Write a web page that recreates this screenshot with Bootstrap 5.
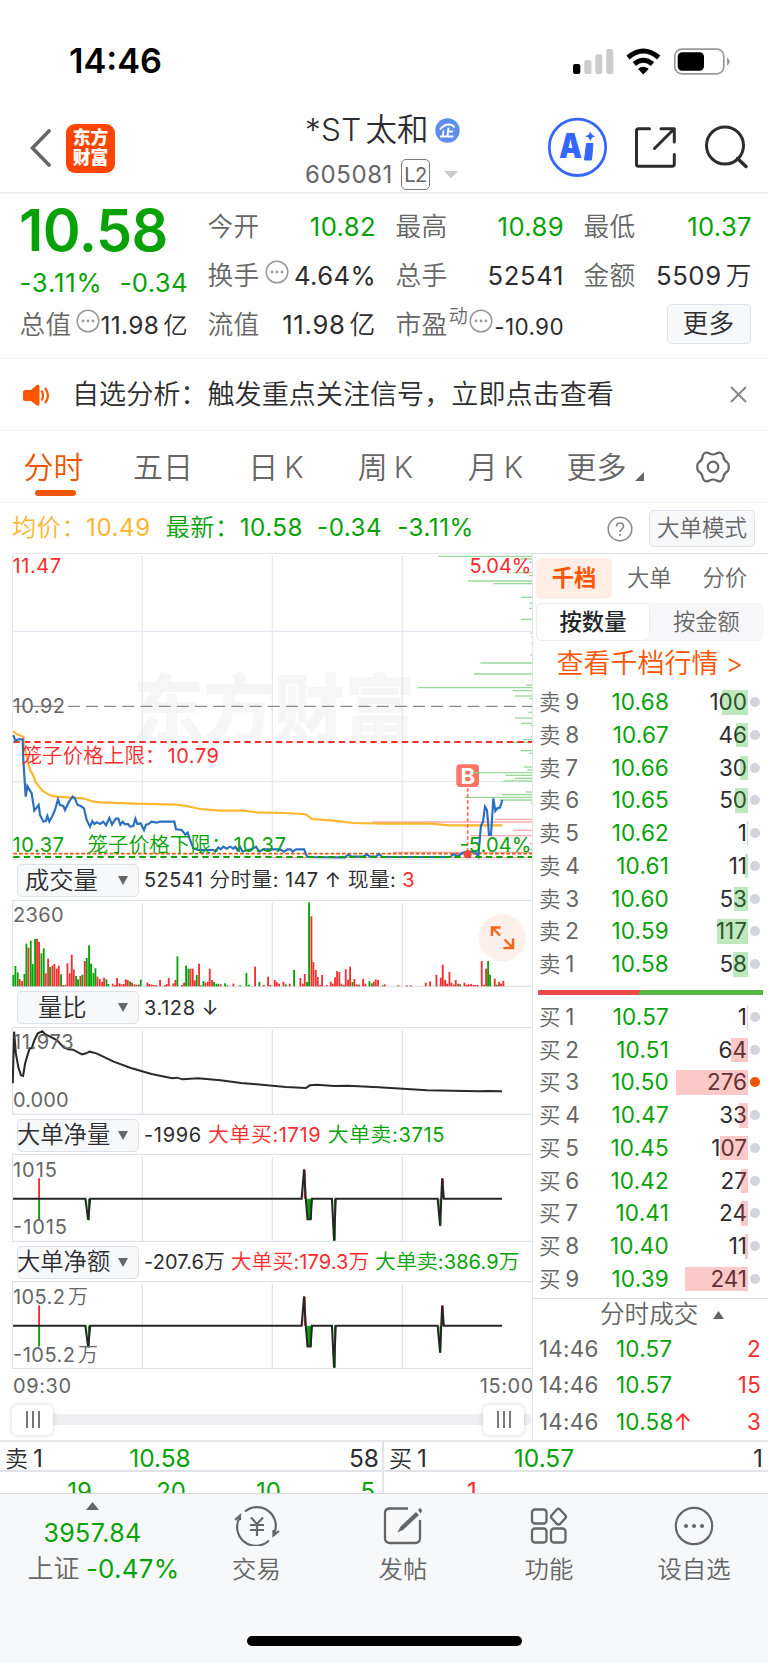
<!DOCTYPE html>
<html lang="zh-CN">
<head>
<meta charset="utf-8">
<meta name="viewport" content="width=device-width, initial-scale=1">
<title>*ST太和 605081</title>
<link rel="stylesheet" href="https://cdn.jsdelivr.net/npm/bootstrap@5.3.0/dist/css/bootstrap.min.css">
<style>
:root{--up:#fc2b2e;--down:#07a207;--ink:#2d2d2f;--dim:#666;--line:#e3e5ec;--soft:#f7f8fa}
body{font-family:Inter,"Noto Sans CJK SC",sans-serif;font-weight:400;color:var(--ink);background:#fff;width:768px;overflow-x:hidden;line-height:1}
.phone{width:768px;height:1663px;overflow:hidden}
.phone>*{flex-shrink:0}
.up{color:var(--up)}.down{color:var(--down)}.dim{color:var(--dim)}
.cj{font-weight:350}
svg{display:block;flex:none}
svg text{font-family:Inter,"Noto Sans CJK SC",sans-serif}
.nw{white-space:nowrap}
.statusbar{height:103px;padding:20px 38px 0 69px}
.clock{font-size:34.3px;font-weight:600;color:#000}
.topbar{height:91px;border-bottom:2px solid #eee;padding:1px 18px 0 30px;position:relative}
.logo{width:49px;height:49px;border-radius:9px;background:#ff4400;color:#fff;font-size:17.8px;line-height:20px;font-weight:900;margin-left:14px}
.title{position:absolute;left:305px;top:10px}
.name{font-size:31.5px;line-height:34px}
.code{font-size:24px;line-height:30px;margin-top:12px}
.lv{border:1.5px solid #777;border-radius:5px;width:29px;height:31px;font-size:20px;line-height:30px;letter-spacing:-.5px}
.quote{display:grid;grid-template-columns:168px 168px 168px 168px;column-gap:20px;grid-template-rows:49px 49px 49px;padding:8px 15px 8px 19px;height:165px;border-bottom:1px solid #eceef0;font-size:25.7px;letter-spacing:.35px}
.quote>div:not(.big){margin-left:.5px;margin-right:-1px}
.quote .big{font-size:57.5px;font-weight:600;letter-spacing:-.5px;line-height:58px;margin-top:-1px;margin-bottom:-8px}
.more{background:var(--soft);border:1.5px solid #dfe1e8;border-radius:5px;width:84px;height:40px;color:var(--ink)}
.notice{height:72px;border-bottom:1px solid #f0f0f2;padding:0 21px 0 22px;font-size:27.1px}
.tabs{display:grid;grid-template-columns:107px 112px 120px 93px 127px 92px 117px;height:72px;border-bottom:1px solid #eee;font-size:30px;color:var(--dim)}
.tabs>div{display:flex;align-items:center;justify-content:center;position:relative}
.tabs .on{color:#ee5500}
.tabs .on::after{content:"";position:absolute;left:34.5px;bottom:6px;width:41px;height:6px;border-radius:3px;background:#ee5500}
.info{height:50px;padding:1px 13px 0 12px;font-size:24.2px;letter-spacing:.5px}
.left{width:521px;margin-left:12px;margin-right:-1px}
.tool{height:40px;padding:1px 0 0 5px;font-size:20px;gap:5px;letter-spacing:.4px}
.tool span .cj{font-size:20.8px}
.pick{width:122px;height:33px;border:1.5px solid #dfe1e8;border-radius:5px;background:var(--soft);font-size:24.3px;position:relative;flex:none;letter-spacing:0}
.pick i{position:absolute;right:10px;top:11px;border:5px solid transparent;border-top:9px solid #666;border-bottom:0}
.pick.four{font-size:23.3px;text-indent:-1px}
.right{width:236px;border-left:1px solid var(--line);border-top:1px solid #dcdde2}
.seg{height:38px;margin:4px 4px 0 3px;border-radius:6px;background:#f7f7fa;font-size:22.3px}
.seg .on{width:114px;height:38px;background:#fff;border:1.5px solid #ececf0;border-radius:6px;font-weight:500}
.kinds{height:41px;margin:4px 3px 0;font-size:22.3px}
.kinds .on{width:76px;height:41px;border-radius:6px;background:#ffeee6;color:#ff5500;font-weight:700}
.lvl{height:32.75px;font-size:22.5px;position:relative;padding:0 21px 0 6px}
.lvl .px{width:80px;letter-spacing:.2px}
.lvl .bar{position:absolute;right:20.5px;top:4px;height:24.5px}
.lvl .dot{position:absolute;right:8px;top:11px;width:10px;height:10px;border-radius:50%;background:#d3d5dc}
.ratio{height:5px;margin:3px 5px 0 5px;background:linear-gradient(120deg,#ee4a4a 45%,#57b943 45.2%)}
.tick{height:36.7px;font-size:22.4px;padding:0 7px 0 6px;letter-spacing:.25px}
.axis{height:33px;font-size:20px;color:var(--dim);letter-spacing:.6px;margin:0 -1px 0 1px}
.slider{height:38px;position:relative}
.track{position:absolute;left:30px;right:1px;top:12px;height:11px;background:#efeff2;border-radius:5px}
.grip{width:41px;height:30px;border-radius:6px;background:#fff;box-shadow:0 0 5px rgba(0,0,0,.18);position:absolute;top:2.5px;gap:4px}
.grip b{width:2px;height:17px;background:#777}
.best{height:32px;margin-top:-1px;border-top:2px solid #e6e7eb;border-bottom:2px solid #e2e3e8;font-size:24.5px}
.best>div{padding-top:4px!important}
.queue{height:21px;overflow:hidden;font-size:24px}
.queue>div{padding-top:8px}
.split{border-left:2px solid #e3e4e9}
.foot{height:170px;background:var(--soft);border-top:1px solid #d8d9de;font-size:24.4px;color:var(--dim);position:relative}
.foot .item{height:92px;padding-top:11.5px}
.foot .item span{margin-top:11px}
.homebar{position:absolute;left:247px;bottom:17px;width:275px;height:10px;border-radius:5px;background:#000}
</style>
</head>
<body>
<div class="phone d-flex flex-column">
  <div class="statusbar d-flex align-items-center justify-content-between">
    <span class="clock">14:46</span>
    <svg width="158" height="28" viewBox="572 47 158 28">
      <rect x="573" y="63" width="7.3" height="10" rx="2"/><g fill="#ccc"><rect x="584.3" y="59" width="7.2" height="14" rx="2"/><rect x="595.3" y="53.3" width="7" height="19.7" rx="2"/><rect x="606.3" y="48" width="7" height="25" rx="2"/></g>
      <g fill="none" stroke="#000" stroke-width="5"><path d="M628 56.500Q643.300 43.500 658.700 56.500"/><path d="M634.300 63Q643.300 55.500 652.500 63"/></g><path d="M638 68Q643.300 63.500 648.700 68L643.300 73.500Z"/>
      <rect x="674.8" y="48.200" width="49" height="24.600" rx="7" fill="none" stroke="#999" stroke-width="1.700"/><rect x="677.700" y="51.200" width="26.300" height="18.600" rx="4.500"/><path d="M727 56.500Q729.700 58 729.700 60.500T727 64.500Z" fill="#999"/>
    </svg>
  </div>

  <div class="topbar d-flex align-items-center justify-content-between">
    <div class="d-flex align-items-center">
      <svg width="22" height="38" viewBox="0 0 22 38"><path d="M19 2L2.500 19 19 36" fill="none" stroke="#666" stroke-width="3.600" stroke-linecap="round"/></svg>
      <div class="logo d-flex flex-column align-items-center justify-content-center"><span>东方</span><span>财富</span></div>
    </div>
    <div class="title">
      <div class="name d-flex align-items-center cj nw"><span style="letter-spacing:.3px">*ST</span><span class="ms-1">太和</span>
        <svg style="margin-left:6px" width="25" height="25" viewBox="0 0 25 25"><circle cx="12.500" cy="12.500" r="12.200" fill="#5f8eea"/><g fill="none" stroke="#fff" stroke-width="1.900"><path d="M5 11.500Q9 6.500 13.500 6.500T19.500 9.500M5 18.500H18.500M8.500 12.500L7.800 18.500M13.500 9.500L12.500 18M13 13.500H18"/></g></svg>
      </div>
      <div class="code d-flex align-items-center dim"><span style="letter-spacing:.6px">605081</span><span class="lv text-center ms-2">L2</span><svg style="margin-left:14px" width="14" height="8"><path d="M0 0H14L7 7.500Z" fill="#ccc"/></svg></div>
    </div>
    <svg width="203" height="62" viewBox="547 117 203 62">
      <circle cx="577.500" cy="147.300" r="28.200" fill="none" stroke="#3566ff" stroke-width="2.800"/>
      <text x="559" y="158" font-size="34" font-weight="900" fill="#3566ff" textLength="23" lengthAdjust="spacingAndGlyphs">A</text>
      <path d="M586.500 143.500H593L591.500 160H584.500Z" fill="#3566ff" stroke="#3566ff" stroke-linejoin="round"/><path d="M590.300 131.500L592 134.800 595.300 136.200 592 137.700 590.300 141 588.600 137.700 585.300 136.200 588.600 134.800Z" fill="#3566ff"/>
      <g fill="none" stroke="#2d2d2f" stroke-width="3" stroke-linejoin="round" stroke-linecap="round"><path d="M649.500 128.700H638.500Q636.500 128.700 636.500 130.700V164Q636.500 166.300 638.500 166.300H672Q674.300 166.300 674.300 164V154.500M661 128.700H674.300V142M673.500 129.500L654.500 148.500"/><circle cx="725" cy="145.500" r="18.500"/><path d="M737.500 158.500L746 166.500" stroke-width="3.500"/></g>
    </svg>
  </div>

  <div class="quote nw">
    <div class="big down">10.58</div>
    <div class="d-flex align-items-center justify-content-between"><span class="dim cj">今开</span><span class="down">10.82</span></div>
    <div class="d-flex align-items-center justify-content-between"><span class="dim cj">最高</span><span class="down">10.89</span></div>
    <div class="d-flex align-items-center justify-content-between"><span class="dim cj">最低</span><span class="down">10.37</span></div>

    <div class="d-flex align-items-center justify-content-between down" style="padding-top:14px"><span style="letter-spacing:.8px">-3.11%</span><span>-0.34</span></div>
    <div class="d-flex align-items-center justify-content-between"><span class="dim cj">换手</span><svg class="mb-2" width="24" height="24"><use href="#dots"/></svg><span>4.64%</span></div>
    <div class="d-flex align-items-center justify-content-between"><span class="dim cj">总手</span><span style="letter-spacing:.6px">52541</span></div>
    <div class="d-flex align-items-center justify-content-between"><span class="dim cj">金额</span><span style="letter-spacing:.6px">5509<span class="cj ms-1">万</span></span></div>

    <div class="d-flex align-items-center justify-content-between"><span class="dim cj">总值</span><svg class="mb-2 ms-1" width="24" height="24"><use href="#dots"/></svg><span style="font-size:24.400px;padding-top:2px">11.98<span class="cj ms-1">亿</span></span></div>
    <div class="d-flex align-items-center justify-content-between"><span class="dim cj">流值</span><span style="letter-spacing:.7px">11.98<span class="cj ms-1">亿</span></span></div>
    <div class="d-flex align-items-center justify-content-between"><span class="dim cj">市盈</span><span class="dim cj mb-3" style="font-size:19px">动</span><svg class="mb-2" width="24" height="24"><use href="#dots"/></svg><span style="font-size:22.500px;padding-top:5px">-10.90</span></div>
    <div class="d-flex align-items-center justify-content-end"><span class="more d-flex align-items-center justify-content-center cj" style="margin-right:1.500px;margin-top:-2px">更多</span></div>
  </div>
  <svg width="0" height="0" class="position-absolute"><defs><g id="dots"><circle cx="12" cy="12" r="10.800" fill="none" stroke="#999" stroke-width="1.500"/><g fill="#999"><circle cx="7" cy="12" r="1.400"/><circle cx="12" cy="12" r="1.400"/><circle cx="17" cy="12" r="1.400"/></g></g></defs></svg>

  <div class="notice d-flex align-items-center cj nw">
    <svg width="28" height="24" viewBox="22 382 28 24"><path d="M25 389H31L37 383.800Q39.500 383 39.500 386V403Q39.500 405.500 37 404.500L31 400H25Q23 400 23 398V391Q23 389 25 389Z" fill="#ff5500"/><path d="M41.500 389.500Q44.500 394.500 41.500 399.500M45 387Q51 394.500 45 402" fill="none" stroke="#ff5500" stroke-width="2.200"/></svg>
    <span style="margin-left:22px">自选分析：触发重点关注信号，立即点击查看</span>
    <svg class="ms-auto" width="17" height="17"><path d="M1 1L16 16M16 1L1 16" stroke="#888" stroke-width="2"/></svg>
  </div>

  <div class="tabs cj nw">
    <div class="on">分时</div><div>五日</div><div style="padding-right:6px">日<span style="margin-left:6px">K</span></div><div>周<span style="margin-left:6px">K</span></div><div>月<span style="margin-left:6px">K</span></div>
    <div>更多<svg class="ms-2 align-self-end" style="margin-bottom:21px" width="9" height="9"><path d="M9 0V9H0Z" fill="#666"/></svg></div>
    <div><svg width="34" height="34" viewBox="-17 -17 34 34" style="margin-left:6px"><path d="M-6.500 -14.500Q-5 -14.500 -3.500 -13.500Q0 -11.500 3.500 -13.500Q6 -15 8 -14Q10 -13 10.500 -10Q11 -6.500 14 -4.800Q16 -3.500 15.700 0Q16 3.500 14 4.800Q11 6.500 10.500 10Q10 13 8 14Q6 15 3.500 13.500Q0 11.500 -3.500 13.500Q-6 15 -8 14Q-10 13 -10.500 10Q-11 6.500 -14 4.800Q-16 3.500 -15.700 0Q-16 -3.500 -14 -4.800Q-11 -6.500 -10.500 -10Q-10 -14 -6.500 -14.500Z" fill="none" stroke="#666" stroke-width="2.200"/><circle r="5.300" fill="none" stroke="#666" stroke-width="2.200"/></svg></div>
  </div>

  <div class="info d-flex align-items-center nw">
    <span style="color:#fdb62f"><span class="cj">均价：</span>10.49</span>
    <span class="down" style="margin-left:15px"><span class="cj">最新：</span>10.58</span>
    <span class="down" style="margin-left:14px">-0.34</span><span class="down" style="margin-left:15px">-3.11%</span>
    <svg class="ms-auto" width="26" height="26" viewBox="-13 -13 26 26"><circle r="11.800" fill="none" stroke="#888" stroke-width="1.500"/><path d="M-3.500 -2.500Q-3.500 -6 0 -6T3.500 -2.800Q3.500 -1 1.500 .5Q0 1.500 0 3M0 5V7" fill="none" stroke="#888" stroke-width="1.700"/></svg>
    <span class="more d-flex align-items-center justify-content-center cj" style="width:106px;height:37px;font-size:22.500px;margin-left:16px;letter-spacing:0;color:#666">大单模式</span>
  </div>

  <div class="d-flex" style="height:888px">
    <div class="left">
      <svg width="521" height="307" viewBox="12 553 521 307">
        <text x="133" y="736" font-size="74" font-weight="900" fill="#f6f6f6" textLength="282" lengthAdjust="spacingAndGlyphs">东方财富</text>
        <g stroke="#e4e7f0" stroke-width="1.200" fill="none"><path d="M12 553.500H533M12.500 553V860M142.300 556V860M272.300 556V860M402.300 556V860M12 631.300H532M12 781.700H532M12 859.500H533" /></g>
        <g id="depth" transform="translate(0 670) scale(.33333)" stroke-width="4"></g>
        <g fill="none" transform="translate(0 670) scale(.33333)">
          <path d="M40 109H1597" stroke="#8a8a8a" stroke-width="4" stroke-dasharray="36 18.500"/>
          <path d="M40 216H1597" stroke="#f52f2f" stroke-width="5.500" stroke-dasharray="19 12.500"/>
          <path d="M40 551H1597" stroke="#e8560e" stroke-width="5.500" stroke-dasharray="11 6"/>
          <path d="M40 183L50 192 70 200 75 240 90 300 98 313 108 338 128 363 150 376 170 380 250 385 280 395 300 397 400 401 530 404 560 408 600 417 660 422 730 422 770 427 850 429 910 432 920 434 935 447 1000 452 1060 459 1152 461 1290 461 1350 466 1507 466" stroke="#fdb62f" stroke-width="6.500"/>
          <path d="M40 195L46 212 55 208 68 208 70 270 77 380 82 348 95 370 103 422 116 405 120 435 130 455 138 452 142 438 148 455 156 440 165 420 174 388 180 405 190 408 195 420 207 395 218 380 225 386 232 404 242 408 252 415 260 450 270 470 277 453 283 462 290 457 300 462 310 455 318 466 328 444 336 464 347 446 355 446 361 464 368 455 375 463 384 462 390 470 400 468 406 446 412 462 422 460 432 480 438 464 446 462 454 455 470 458 480 455 523 455 528 478 545 480 556 494 563 488 570 510 580 535 595 540 640 540 646 545 655 532 662 538 670 530 680 536 690 530 700 536 706 530 712 540 720 530 728 545 740 540 755 538 768 530 778 545 790 538 840 538 852 545 862 538 872 538 878 545 888 538 912 538 922 561 1035 562 1045 554 1055 560 1090 560 1100 553 1110 560 1128 560 1138 552 1146 561 1350 561 1362 552 1372 560 1385 550 1400 545 1425 545 1435 560 1440 500 1443 467 1449 455 1455 410 1461 420 1467 495 1473 495 1480 385 1486 423 1492 415 1500 413 1507 390" stroke="#2b70c0" stroke-width="6.500"/>
          <path d="M40 561H1597" stroke="#07a207" stroke-width="6" stroke-dasharray="19 12.500"/>
          <path d="M1403 355V545" stroke="#f5664c" stroke-width="5" stroke-dasharray="10 8"/><circle cx="1403" cy="553" r="12" fill="#ee4a3a"/>
          <rect x="1369" y="283" width="68" height="68" rx="12" fill="#fb7464"/><path d="M1422 308H1440" stroke="#7ccf7c" stroke-width="4"/>
        </g>
        <text x="467.700" y="783.500" font-size="22" font-weight="700" fill="#fff" text-anchor="middle">B</text>
        <g font-size="20">
          <text x="12.500" y="573.300" fill="#fc2b2e" textLength="48.500">11.47</text>
          <text x="469.500" y="573.300" fill="#fc2b2e" textLength="62">5.04%</text>
          <text x="12.500" y="712.500" fill="#666" textLength="52.500">10.92</text>
          <text x="21.500" y="762.500" fill="#fc2b2e" textLength="144" font-weight="350" font-size="20.500">笼子价格上限：</text><text x="167.500" y="762.500" fill="#fc2b2e" textLength="51.500">10.79</text>
          <text x="12.500" y="852" fill="#07a207" textLength="51.500">10.37</text>
          <text x="87.500" y="852" fill="#07a207" textLength="144" font-weight="350" font-size="20.500">笼子价格下限：</text><text x="233.500" y="852" fill="#07a207" textLength="52.500">10.37</text>
          <text x="459.500" y="852" fill="#07a207" textLength="72">-5.04%</text>
        </g>
      </svg>

      <div class="tool d-flex align-items-center nw"><div class="pick d-flex align-items-center cj" style="padding-left:7px">成交量<i></i></div><span>52541 <span class="cj">分时量</span>: 147 ↑ <span class="cj">现量</span>: <span class="up">3</span></span></div>
      <svg width="521" height="87" viewBox="12 900 521 87">
        <path d="M12 900.500H533M12.500 900V987M142.300 903V987M272.300 903V987M402.300 903V987M12 986.400H533" stroke="#dfe2eb" stroke-width="1.200" fill="none"/>
        <text x="13" y="922" font-size="20" fill="#666" textLength="50.500">2360</text>
        <g id="vol" transform="translate(0 670) scale(.33333)"></g>
        <circle cx="502.300" cy="937.700" r="23.500" fill="#fdf0ea"/>
        <path d="M492 936V927.500H500.500M492 927.500L500 935.500M503.500 948H513V938.500M513 948L504.500 939.500" fill="none" stroke="#f26419" stroke-width="2.400"/>
      </svg>

      <div class="tool d-flex align-items-center nw"><div class="pick d-flex align-items-center cj" style="padding-left:20px">量比<i></i></div><span style="letter-spacing:.6px">3.128 ↓</span></div>
      <svg width="521" height="88" viewBox="12 1027 521 88">
        <path d="M12 1027.500H533M12.500 1027V1115M142.300 1030V1115M272.300 1030V1115M402.300 1030V1115M12 1114.400H533" stroke="#dfe2eb" stroke-width="1.200" fill="none"/>
        <path transform="translate(0 1000) scale(.34435 .33333)" d="M37 250L41 95 46 160 54 205 61 226 67 228 73 190 86 145 92 145 100 120 110 100 123 94 130 102 165 120 185 142 198 148 212 149 238 163 250 160 260 155 280 160 330 185 380 204 440 222 500 235 514 233 530 238 575 235 640 241 700 249 760 254 830 261 888 264 900 256 920 254 970 258 1010 257 1100 262 1240 271 1390 274 1420 273 1458 274" fill="none" stroke="#2b2b2b" stroke-width="6"/>
        <g font-size="20" fill="#666"><text x="13" y="1049" textLength="60.500">11.973</text><text x="13" y="1106.500" textLength="55.500">0.000</text></g>
      </svg>

      <div class="tool d-flex align-items-center nw" style="height:39px;letter-spacing:.65px"><div class="pick four d-flex align-items-center cj">大单净量<i></i></div><span>-1996 <span class="up"><span class="cj">大单买</span>:1719</span> <span class="down"><span class="cj">大单卖</span>:3715</span></span></div>
      <svg width="521" height="88" viewBox="12 1154 521 88">
        <g id="net"><path d="M12 1154.500H533M12.500 1154V1242M142.300 1157V1242M272.300 1157V1242M402.300 1157V1242M12 1241.400H533" stroke="#dfe2eb" stroke-width="1.200" fill="none"/>
        <g transform="translate(0 1000) scale(.34435 .33333)" fill="none">
          <path d="M113.500 535V596M885 510V596M1286 536V596" stroke="#fc2b2e" stroke-width="5.500"/><path d="M113.500 596V658M258 596V661M972.500 596V722M1279 596V677" stroke="#07a207" stroke-width="5.500"/><path d="M892 596H906V658H892Z" fill="#07a207"/>
          <path d="M38 596H248L256 660 262 596H876L883 508 888 596 893 658H902L906 596H964L970 722 975 596H1271L1278 677 1284 535 1289 596H1458" stroke="#262626" stroke-width="6"/>
        </g></g>
        <g font-size="20" fill="#666"><text x="13" y="1176.500" textLength="44">1015</text><text x="13" y="1234" textLength="54">-1015</text></g>
      </svg>

      <div class="tool d-flex align-items-center nw" style="height:39px;letter-spacing:.1px"><div class="pick four d-flex align-items-center cj">大单净额<i></i></div><span>-207.6<span class="cj">万</span> <span class="up"><span class="cj">大单买</span>:179.3<span class="cj">万</span></span> <span class="down"><span class="cj">大单卖</span>:386.9<span class="cj">万</span></span></span></div>
      <svg width="521" height="88" viewBox="12 1281 521 88">
        <use href="#net" y="127.100"/>
        <g font-size="20" fill="#666"><text x="13" y="1304" textLength="52">105.2</text><text x="68" y="1304" font-weight="350">万</text><text x="13" y="1361.500" textLength="62">-105.2</text><text x="78" y="1361.500" font-weight="350">万</text></g>
      </svg>
      <div class="axis d-flex justify-content-between align-items-center"><span>09:30</span><span>15:00</span></div>
      <div class="slider"><div class="track"></div>
        <div class="grip d-flex align-items-center justify-content-center" style="left:0"><b></b><b></b><b></b></div>
        <div class="grip d-flex align-items-center justify-content-center" style="left:471px"><b></b><b></b><b></b></div>
      </div>
    </div>

    <div class="right nw">
      <div class="kinds d-flex align-items-center dim cj"><span class="on d-flex align-items-center justify-content-center">千档</span><span style="margin-left:15px">大单</span><span style="margin-left:31px">分价</span></div>
      <div class="seg d-flex align-items-center dim cj"><span class="on d-flex align-items-center justify-content-center text-dark">按数量</span><span style="margin-left:23px">按金额</span></div>
      <div class="cj d-flex align-items-center" style="height:45px;font-size:27px;color:#ff5500;padding-left:23.500px">查看千档行情<span style="margin-left:7px">&gt;</span></div>
      <div id="asks"></div>
      <div class="d-flex align-items-center" style="height:20px"><div class="ratio flex-fill"></div></div>
      <div id="bids"></div>
      <div class="dim cj d-flex align-items-center" style="border-top:1.500px solid #dcdde2;height:33px;margin-top:2px;font-size:24.600px;padding-left:67px">分时成交<svg style="margin-left:15px" width="11" height="8"><path d="M0 8L5.500 0 11 8Z" fill="#666"/></svg></div>
      <div id="ticks"></div>
    </div>
  </div>

  <div class="best d-flex">
    <div class="d-flex align-items-center justify-content-between" style="width:382px;padding:0 3px 0 5px"><span style="width:124px;word-spacing:-2px"><span class="cj" style="font-size:23px">卖</span> 1</span><span class="down">10.58</span><span class="text-end" style="width:188px">58</span></div>
    <div class="split d-flex align-items-center justify-content-between" style="width:386px;padding:0 5px"><span style="width:124px;word-spacing:-2px"><span class="cj" style="font-size:23px">买</span> 1</span><span class="down">10.57</span><span class="text-end" style="width:188px">1</span></div>
  </div>
  <div class="queue d-flex">
    <div class="down d-flex justify-content-end" style="width:382px;padding-right:7px"><span>19</span><span style="width:94px" class="text-end">20</span><span style="width:95px" class="text-end">10</span><span style="width:94px" class="text-end">5</span></div>
    <div class="split up" style="width:386px;padding-left:83px">1</div>
  </div>

  <div class="foot d-flex nw">
    <div class="d-flex flex-column align-items-center" style="width:185px;height:92px;padding-top:8px"><svg width="13" height="8"><path d="M0 8L6.500 0 13 8Z" fill="#666"/></svg><span class="down" style="font-size:25px;line-height:28px;margin-top:9px;letter-spacing:.4px">3957.84</span><span style="font-size:26px;line-height:30px;margin-top:7px;padding-left:22px"><span class="cj">上证</span> <span class="down" style="margin-left:-1px;letter-spacing:.2px">-0.47%</span></span></div>
    <div class="item d-flex flex-column align-items-center cj" style="width:143px"><svg width="46" height="40" viewBox="-23 -20 46 40"><g fill="none" stroke="#666" stroke-width="2.200"><path d="M-12 -14.500A18.800 18.800 0 0 1 17 8M12 14.500A18.800 18.800 0 0 1 -17 -9M-22 -6L-17 -10.500V-6M22 5L16.500 9.500V4M-6 -8.500L0 -2 6 -8.500M0 -2V10M-7 -1H7M-7 4H7"/></g></svg><span>交易</span></div>
    <div class="item d-flex flex-column align-items-center cj" style="width:150px"><svg width="42" height="40" viewBox="0 0 42 40"><path d="M26 2.500H8Q3 2.500 3 7V32Q3 37 8 37H33Q38 37 38 32V14" fill="none" stroke="#666" stroke-width="2.300"/><path d="M34 6L37 9 21 24 15.500 26.500 18.500 20.500ZM36 4L38 2Q40 3 40 5L38.500 7.500Z" fill="#666"/></svg><span>发帖</span></div>
    <div class="item d-flex flex-column align-items-center cj" style="width:142px"><svg width="40" height="40" viewBox="0 0 40 40"><g fill="none" stroke="#666" stroke-width="2.300"><rect x="3" y="3.500" width="14.500" height="14" rx="3"/><rect x="3" y="22.500" width="14.500" height="14" rx="3"/><rect x="22" y="22.500" width="14.500" height="14" rx="3"/><path d="M27.800 3.500Q29.500 2 31 3.500L36.500 9.500Q37.500 11 36.500 12L31 18Q29.500 19 28 18L22.500 12Q21.500 11 22.500 9.500Z"/></g></svg><span>功能</span></div>
    <div class="item d-flex flex-column align-items-center cj" style="width:148px"><svg width="40" height="40" viewBox="-20 -20 40 40"><circle r="18.200" fill="none" stroke="#666" stroke-width="2.200"/><g fill="#666"><circle cx="-8" r="2.100"/><circle r="2.100"/><circle cx="8" r="2.100"/></g></svg><span>设自选</span></div>
    <div class="homebar"></div>
  </div>
</div>

<script src="https://cdn.jsdelivr.net/npm/bootstrap@5.3.0/dist/js/bootstrap.bundle.min.js"></script>
<script>
const byId = id => document.getElementById(id);
// order book: [level, price, lots]
const asks = [[9,'10.68',100],[8,'10.67',46],[7,'10.66',30],[6,'10.65',50],[5,'10.62',1],[4,'10.61',11],[3,'10.60',53],[2,'10.59',117],[1,'10.58',58]];
const bids = [[1,'10.57',1],[2,'10.51',64],[3,'10.50',276],[4,'10.47',33],[5,'10.45',107],[6,'10.42',27],[7,'10.41',24],[8,'10.40',11],[9,'10.39',241]];
const level = (side, tint, [n, p, q]) => `<div class="lvl d-flex align-items-center"><span class="dim" style="width:50px;word-spacing:-1.500px"><span class="cj" style="font-size:21.500px">${side}</span> ${n}</span><span class="px down text-end">${p}</span><span class="ms-auto">${q}</span><span class="bar" style="width:${q * .258}px;background:${tint}"></span><span class="dot"${q === 276 ? ' style="background:#ee5500"' : ''}></span></div>`;
byId('asks').innerHTML = asks.map(r => level('卖', 'rgba(44,178,44,.3)', r)).join('');
byId('bids').innerHTML = bids.map(r => level('买', 'rgba(245,60,60,.28)', r)).join('');
byId('ticks').innerHTML = [['10.57',2],['10.57',15],['10.58<span class="up">↑</span>',3]].map(([p, q]) => `<div class="tick d-flex align-items-center"><span class="dim" style="width:77px">14:46</span><span class="down">${p}</span><span class="up ms-auto">${q}</span></div>`).join('');

// resting-order depth: y, start x
const sell = [[-341,1315],[-333,1552],[-323,1588],[-292,1540],[-283,1587],[-267,1404],[-259,1481],[-218,1563],[-201,1588],[-185,1587],[-152,1563],[-111,1592],[-100,1594],[-80,1594],[-45,1592],[-21,1441],[12,1422],[45,1578],[53,1253],[62,1538],[78,1545],[86,1588],[110,1590],[127,1585],[144,1545],[160,1563],[168,1592],[200,1593],[209,1568],[217,1532],[242,1563],[250,1588],[291,1571],[300,1582],[308,1425],[316,1517],[325,1545],[333,1510],[366,1578],[374,1505],[382,1395],[390,1499],[398,1593]];
const buy = [[448,1485],[456,1117],[481,1540],[497,1412],[521,1590],[538,1585],[547,1178],[563,815]];
const rays = (list, c) => list.map(([y, x]) => `<path d="M${x} ${y}H1597" stroke="${c}"/>`).join('');
byId('depth').innerHTML = rays(sell, '#9bd99b') + rays(buy, '#fbaaaa');

// volume per minute: colour, x, top
const vol = 'g40,915 g46,888 g53,907 r59,927 r66,933 g73,912 g79,821 r85,833 g92,812 g98,882 g105,807 r111,806 r117,816 g124,850 g131,835 r137,910 r144,866 g150,891 r157,887 r163,882 r170,896 r176,887 g183,913 r189,945 r196,945 r202,880 r209,910 r215,854 r221,898 g228,918 g234,928 r241,918 g247,914 r254,873 g260,864 g267,826 g273,881 g280,909 g286,895 r292,920 r299,927 r306,935 r312,923 g319,928 g325,942 r338,941 r345,945 r351,924 r358,940 r364,943 r371,942 r377,928 r383,930 g390,934 r396,938 r403,943 r409,944 g416,944 g422,929 r442,938 r448,942 r455,944 r461,945 r468,945 r480,930 r494,945 r500,942 r506,924 r520,940 r526,930 g532,859 r546,945 r552,938 g558,887 g565,896 r571,896 r578,896 r584,931 g590,915 r597,881 g603,946 g610,933 r616,938 r623,935 r629,896 r636,930 g642,936 g649,941 g655,942 r662,943 g675,940 g682,946 r700,941 g720,946 g739,909 g746,944 r765,890 g778,936 r791,945 r804,920 r811,945 r824,930 r830,936 r837,941 r850,935 g857,943 r869,941 g882,900 r901,924 r908,941 r914,912 g921,936 g927,697 r934,739 r940,876 r947,900 r953,921 r960,945 r966,915 r980,945 r992,935 r998,941 r1005,922 r1011,903 r1018,906 r1024,941 r1031,945 r1037,898 r1044,929 r1050,890 g1057,936 r1063,927 r1070,943 r1077,944 r1089,926 r1096,941 g1108,933 g1115,940 r1121,935 r1127,928 r1134,930 g1148,946 r1154,943 r1195,946 r1220,946 r1232,946 r1277,938 r1290,934 r1309,914 r1322,923 r1328,884 r1335,930 r1341,941 r1348,906 r1354,938 r1361,944 r1367,930 r1374,941 g1380,943 r1393,938 r1400,944 r1406,943 r1413,942 r1420,945 r1426,945 r1433,945 r1445,873 r1452,945 r1458,896 g1464,873 g1470,914 r1484,926 g1490,944 r1497,936 r1503,941 r1510,932';
byId('vol').innerHTML = vol.split(' ').map(b => { const [x, y] = b.slice(1).split(','); return `<rect x="${x - 2.5}" y="${y}" width="5.5" height="${949 - y}" fill="${b[0] === 'g' ? '#07a207' : '#f52f2f'}"/>`; }).join('');
</script>
</body>
</html>
